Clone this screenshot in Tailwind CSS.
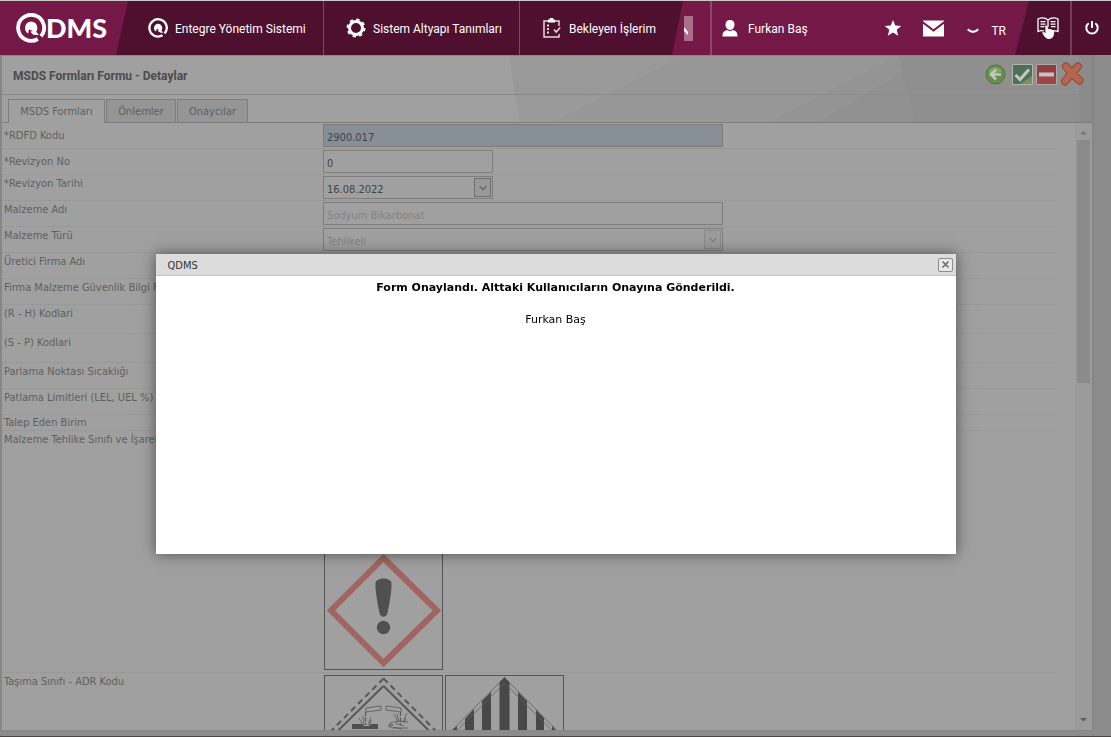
<!DOCTYPE html>
<html lang="tr">
<head>
    <meta charset="UTF-8">
    <meta name="viewport" content="width=device-width, initial-scale=1.0">
    <title>QDMS - MSDS Formları</title>
    <script src="https://cdn.jsdelivr.net/npm/@tailwindcss/browser@4"></script>
</head>
<body class="flex h-screen flex-col overflow-hidden border-b border-[#4a4646] bg-[#8c8c8c] font-['DejaVu_Sans_Condensed','DejaVu_Sans',sans-serif] text-[11px] leading-4 text-[#5f5f5f]">

    <!-- Top bar -->
    <header class="flex h-[55px] shrink-0 border-t border-[#c9c9c9] bg-[#4e102e] font-['Roboto',sans-serif] text-xs text-white">
        <a href="#" aria-label="QDMS" class="flex w-32 shrink-0 items-center bg-[#741848] pl-4 [clip-path:polygon(0_0,100%_0,calc(100%-12px)_100%,0_100%)]">
            <svg class="h-[30px] w-[30px]" viewBox="0 0 30 30" fill="none">
                <path d="M21.800 26A13 13 0 1 1 25 23.300" stroke="#fff" stroke-width="3.800"/>
                <path d="M15 8.500a6.400 6.400 0 0 1 6.400 6.400c0 1.500-.4 2.700-1.200 3.800l2.800 3.300h-3.500c-2.500-.2-4.200-1.500-5-3.500l2.500-.3-4-2-.8 4.200A6.400 6.400 0 0 1 15 8.500z" fill="#fff"/>
            </svg>
            <span class="font-['Lato',sans-serif] text-[27px] leading-8 font-black">DMS</span>
        </a>
        <nav class="flex shrink-0">
            <a href="#" class="flex w-[196px] items-center gap-[7px] border-r border-[#7d4b64] pl-5">
                <svg class="h-5 w-5" viewBox="0 0 30 30" fill="none">
                    <path d="M21.800 26A13 13 0 1 1 25 23.300" stroke="#fff" stroke-width="3.500"/>
                    <path d="M15 8.500a6.400 6.400 0 0 1 6.400 6.400c0 1.500-.4 2.700-1.200 3.800l2.800 3.300h-3.500c-2.500-.2-4.200-1.500-5-3.500l2.500-.3-4-2-.8 4.200A6.400 6.400 0 0 1 15 8.500z" fill="#fff"/>
                </svg>
                <span class="pt-0.5">Entegre Yönetim Sistemi</span>
            </a>
            <a href="#" class="flex w-[196px] items-center gap-[7px] border-r border-[#7d4b64] pl-[22px]">
                <svg class="h-5 w-5" viewBox="0 0 20 20" fill="none" stroke="#fff">
                    <circle cx="10" cy="10" r="6.500" stroke-width="3"/>
                    <circle cx="10" cy="10" r="8.500" stroke-width="2" stroke-dasharray="3.300 3.370"/>
                </svg>
                <span class="pt-0.5">Sistem Altyapı Tanımları</span>
            </a>
            <a href="#" class="flex w-[163px] items-center gap-[7px] pl-[22px]">
                <svg class="h-5 w-5" viewBox="0 0 20 20" fill="none" stroke="#e6dae0" stroke-width="1.500">
                    <path d="M6 3H2v16h15v-3M13 3h4v5"/>
                    <path d="M6 1.500h1.500a2 2 0 0 1 4 0H13v3H6z" fill="#fff" stroke="none"/>
                    <path d="M5 7.500h2M5 11h2M5 14.500h2" stroke-width="2"/>
                    <path d="M12 11.500l2.200 2.500 4-4.500"/>
                </svg>
                <span class="pt-0.5">Bekleyen İşlerim</span>
            </a>
        </nav>
        <div class="-ml-[11px] flex min-w-0 flex-1 items-center bg-[#741848] pr-[23px] [clip-path:polygon(11px_0,100%_0,calc(100%-14px)_100%,0_100%)]">
            <button type="button" aria-label="Ara" class="ml-3 h-[25px] w-[9px] bg-[#aa6e8b]">
                <svg class="h-[25px] w-[9px]" viewBox="0 0 9 25"><path d="M0 11l4 5v3L0 15z" fill="#fff"/></svg>
            </button>
            <div class="ml-[17px] h-full w-0.5 bg-[#8f466d]"></div>
            <a href="#" class="flex items-center gap-2.5 pl-2.5">
                <svg class="h-[18px] w-4" viewBox="0 0 16 18" fill="#fff">
                    <path d="M8 1c3 0 4.500 2 4.500 4.700S10.500 11 8 11 3.500 8.400 3.500 5.700 5 1 8 1z"/>
                    <path d="M.5 17.500c0-4 1-5.500 4.500-6.500 2 1.300 4 1.300 6 0 3.500 1 4.500 2.500 4.500 6.500z"/>
                </svg>
                <span class="pt-0.5">Furkan Baş</span>
            </a>
            <div class="ml-auto flex items-center">
                <button type="button" aria-label="Favoriler">
                    <svg class="h-[18px] w-[18px]" viewBox="0 0 18 18" fill="#fff"><path d="M9 1l2.300 5.500 6 .4-4.600 3.900 1.500 5.900L9 13.500l-5.200 3.200 1.500-5.900L.7 6.900l6-.4z"/></svg>
                </button>
                <button type="button" aria-label="Mesajlar" class="ml-5">
                    <svg class="h-[17px] w-[23px]" viewBox="0 0 23 17"><path d="M1 .5h21v16H1z" fill="#fff"/><path d="M.5 2l11 8.500 11-8.500" fill="none" stroke="#741848" stroke-width="2"/></svg>
                </button>
                <button type="button" class="ml-[22px] flex items-center gap-3 pt-1.5">
                    <svg class="h-1.5 w-3" viewBox="0 0 12 6" fill="none" stroke="#fff" stroke-width="2.200"><path d="M.7 1.200Q6 6.500 11.300 1.200"/></svg>
                    TR
                </button>
            </div>
        </div>
        <button type="button" aria-label="Yardım" class="flex w-[41px] shrink-0 items-center pl-[7px]">
            <svg class="h-6 w-6" viewBox="0 0 24 24" fill="none" stroke="#fff" stroke-width="1.300">
                <path d="M12 4C9 1.500 5.500 1.500 2 3v12.500c2.500-1 4.500-1 6-.5M12 4c3-2.500 6.500-2.500 10-1v12.500c-1.500-.7-3-.8-5-.5M12 4v7"/>
                <path d="M4.500 5.700h5M4.500 8.200h5M4.500 10.700h4M14.500 5.700h5M14.500 8.200h5M15 10.700h4.500"/>
                <path d="M9.300 10c.8-.8 2-.3 2.300.8l.5 2.300c1-.6 1.800-.4 2.300.3 1-.4 1.700 0 2 .6 1-.1 1.800.5 1.800 1.600 0 4-1 7.400-5 7.400-3.200 0-5-2.500-7-6.300.8-1 2-.8 3.300.6z" fill="#fff" stroke="none"/>
            </svg>
        </button>
        <button type="button" aria-label="Çıkış" class="flex w-[41px] shrink-0 items-center justify-center border-l-2 border-[#70405a]">
            <svg class="h-4 w-4" viewBox="0 0 16 16" fill="none" stroke="#fff" stroke-width="2"><path d="M8 1v7M4.700 3.200a5.700 5.700 0 1 0 6.600 0"/></svg>
        </button>
    </header>

    <!-- Form window -->
    <main class="mr-[17px] mb-[5px] flex min-h-0 flex-1 flex-col rounded-br border-2 border-y border-[#868686] bg-[#a0a0a0]">
        <div class="relative shrink-0">
            <svg class="absolute inset-0 h-full w-full" viewBox="0 0 1091 67" preserveAspectRatio="none">
                <path d="M508 0h583v67H518z" fill="#9a9a9a"/>
                <path d="M550 67L680 0h411v67z" fill="#979797"/>
                <path d="M508 0h170l-100 44-64 0z" fill="#999"/>
                <path d="M765 67L895 0h196v67z" fill="#949494"/>
                <path d="M815 67L930 0h161v67z" fill="#919191"/>
                <path d="M897 0l17 67h177V0z" fill="#8f8f8f"/>
                <path d="M1078 0h13v67h-13z" fill="#8b8b8b"/>
            </svg>
            <div class="relative flex h-[39px] items-center justify-between border-b border-[#8a8a8a] pr-2 pl-[11px]">
                <h1 class="pt-0.5 font-['Roboto',sans-serif] text-xs font-bold text-[#4c4c4c]">MSDS Formları Formu - Detaylar</h1>
                <div class="flex items-center gap-[3px] pb-0.5">
                    <button type="button" aria-label="Geri" class="mr-[3px]">
                        <svg class="h-[21px] w-[21px]" viewBox="0 0 21 21" fill="none"><circle cx="10.500" cy="10.500" r="9.500" fill="#668d4c" stroke="#52733f"/><path d="M4 7a7.500 7.500 0 0 1 13 0c-3 3-9 1-13 3z" fill="#82a368"/><path d="M16 10.500H6.500M11 5.500l-5 5 5 5" stroke="#c2c8bd" stroke-width="2.500"/></svg>
                    </button>
                    <button type="button" aria-label="Onayla">
                        <svg class="h-[21px] w-[21px]" viewBox="0 0 21 21"><path d="M.5.5h20v20H.5z" fill="#4c7256" stroke="#b0b4b0"/><path d="M8 20L20 12v8z" fill="#7b9159"/><path d="M3.500 11l4.500 4.500 9-10" fill="none" stroke="#c8c8c8" stroke-width="3"/></svg>
                    </button>
                    <button type="button" aria-label="Reddet">
                        <svg class="h-[21px] w-[21px]" viewBox="0 0 21 21"><path d="M.5.5h20v20H.5z" fill="#8e4040" stroke="#b0a8a8"/><path d="M1 13h19v7H1z" fill="#a04444"/><path d="M3 8.500h15v4H3z" fill="#c4c4c8"/></svg>
                    </button>
                    <button type="button" aria-label="Kapat">
                        <svg class="h-6 w-6" viewBox="0 0 24 24" stroke-linecap="round" fill="none"><path d="M6 4.500Q11 11 19.500 18.500M18 4.500Q11 11 5 19.500" stroke="#8d4434" stroke-width="8"/><path d="M6 4.500Q11 11 19.500 18.500M18 4.500Q11 11 5 19.500" stroke="#b8654f" stroke-width="6.200"/></svg>
                    </button>
                </div>
            </div>
            <div role="tablist" class="relative flex h-7 items-end border-b border-[#7d7d7d] pl-1.5">
                <button type="button" role="tab" aria-selected="true" class="-mb-px h-6 w-[97px] border border-b-0 border-[#7d7d7d] bg-[#a0a0a0]">MSDS Formları</button>
                <button type="button" role="tab" class="ml-px h-[23px] w-[70px] border border-b-0 border-[#7d7d7d] bg-[#959595] pt-0.5">Önlemler</button>
                <button type="button" role="tab" class="ml-px h-[23px] w-[71px] border border-b-0 border-[#7d7d7d] bg-[#959595] pt-0.5">Onaycılar</button>
            </div>
        </div>

        <div class="flex min-h-0 flex-1">
            <form class="min-w-0 flex-1 overflow-hidden pr-5">
                <table class="w-full table-fixed border-separate border-spacing-0 [&_td]:border-b [&_td]:border-dotted [&_td]:border-[#929292] [&_td]:p-0 [&_td]:py-px [&_td]:align-top [&_th]:border-b [&_th]:border-dotted [&_th]:border-[#929292] [&_th]:p-0 [&_th]:pt-px [&_th]:pl-0.5 [&_th]:text-left [&_th]:font-normal [&_th]:whitespace-nowrap">
                    <colgroup><col class="w-[321px]"><col></colgroup>
                    <tbody>
                        <tr class="h-[26px]">
                            <th class="align-middle"><label for="kod">*RDFD Kodu</label></th>
                            <td><input id="kod" type="text" value="2900.017" class="block h-[23px] w-[400px] border border-[#7d7d7d] bg-[#868e96] px-[3px] pt-1 text-[#444]"></td>
                        </tr>
                        <tr class="h-[26px]">
                            <th class="align-middle"><label for="revno">*Revizyon No</label></th>
                            <td><input id="revno" type="text" value="0" class="block h-[23px] w-[170px] border border-[#7d7d7d] px-[3px] pt-1 text-[#444]"></td>
                        </tr>
                        <tr class="h-[26px]">
                            <th class="align-top"><label for="tarih">*Revizyon Tarihi</label></th>
                            <td>
                                <div class="flex h-[23px] w-[170px] items-center border border-[#7d7d7d] pr-px">
                                    <input id="tarih" type="text" value="16.08.2022" class="h-full min-w-0 flex-1 px-[3px] pt-1 text-[#444]">
                                    <button type="button" aria-label="Takvim" class="flex h-[19px] w-[17px] items-center justify-center border border-[#6e6e6e] bg-[#999]">
                                        <svg class="h-2 w-2" viewBox="0 0 8 8" fill="none" stroke="#666" stroke-width="1.300"><path d="M.5 2L4 5.500 7.500 2"/></svg>
                                    </button>
                                </div>
                            </td>
                        </tr>
                        <tr class="h-[26px]">
                            <th class="align-top"><label for="malzeme">Malzeme Adı</label></th>
                            <td><input id="malzeme" type="text" value="Sodyum Bikarbonat" disabled class="block h-[23px] w-[400px] border border-[#7d7d7d] px-[3px] pt-1 text-[#828282]"></td>
                        </tr>
                        <tr class="h-[26px]">
                            <th class="align-top"><label for="tur">Malzeme Türü</label></th>
                            <td>
                                <div class="relative w-[400px]">
                                    <select id="tur" disabled class="block h-[23px] w-full appearance-none border border-[#7d7d7d] px-[3px] pt-1 text-[#828282] opacity-100"><option>Tehlikeli</option></select>
                                    <span class="pointer-events-none absolute top-0.5 right-0.5 flex h-[19px] w-[17px] items-center justify-center border border-[#8a8a8a] bg-[#9c9c9c]">
                                        <svg class="h-2 w-2" viewBox="0 0 8 8" fill="none" stroke="#808080" stroke-width="1.300"><path d="M.5 2L4 5.500 7.500 2"/></svg>
                                    </span>
                                </div>
                            </td>
                        </tr>
                        <tr class="h-[26px]"><th class="align-top">Üretici Firma Adı</th><td></td></tr>
                        <tr class="h-[26px]"><th class="align-top">Firma Malzeme Güvenlik Bilgi Formu</th><td></td></tr>
                        <tr class="h-[29px]"><th class="align-top">(R - H) Kodlari</th><td></td></tr>
                        <tr class="h-[29px]"><th class="align-top">(S - P) Kodlari</th><td></td></tr>
                        <tr class="h-[26px]"><th class="align-top">Parlama Noktası Sıcaklığı</th><td></td></tr>
                        <tr class="h-[26px]"><th class="align-top">Patlama Limitleri (LEL, UEL %)</th><td></td></tr>
                        <tr class="h-4"><th class="align-top leading-[14px]">Talep Eden Birim</th><td></td></tr>
                        <tr class="h-[242px]">
                            <th class="align-top">Malzeme Tehlike Sınıfı ve İşaretleri</th>
                            <td>
                                <div class="flex h-[239px] items-end pb-px pl-px">
                                    <svg class="h-[119px] w-[119px] border border-[#555]" viewBox="0 0 117 117">
                                        <path d="M58.500 6L112 58.500 58.500 111 6 58.500z" fill="none" stroke="#a16561" stroke-width="6"/>
                                        <path d="M50.500 31c1-6 15-6 16 0 .4 7-2 20-4 30-1 5-7 5-8 0-2-10-4.500-23-4-30z" fill="#505050"/>
                                        <circle cx="58.500" cy="75.500" r="6.700" fill="#505050"/>
                                    </svg>
                                </div>
                            </td>
                        </tr>
                        <tr>
                            <th class="align-top">Taşıma Sınıfı - ADR Kodu</th>
                            <td>
                                <div class="flex gap-0.5 pt-px pl-px">
                                    <svg class="h-[119px] w-[119px] border border-[#555]" viewBox="0 0 117 117" fill="none" stroke="#585858">
                                        <path d="M58.500 2.500L2 59M58.500 2.500L115 59" stroke-width="2" stroke-dasharray="6 4"/>
                                        <path d="M58.500 10L5 62.500M58.500 10L112 62.500" stroke-width="2"/>
                                        <path d="M41 32l15-2v4l-15 2zM76 32l-15-2v4l15 2z" stroke-width=".8"/>
                                        <path d="M40.500 36v13M75.500 36v13" stroke-width="1.200" stroke-dasharray="4 1.500"/>
                                        <path d="M38 49l-4-7M39 49l-1-9M43 49l3-8M45 49l1-5M73 46l-4-8M74 46l-2-8M78 46l4-9M79 47l2-5" stroke-width=".8"/>
                                        <path d="M27 48h10l2 2h5l2-2h7v5H27z" fill="#505050" stroke="none"/>
                                        <path d="M83 46c-7-1-16-1-19 2l4 1-5 1 5 2h15M70 47l9 3M68 51l9 2" stroke-width=".8"/>
                                    </svg>
                                    <svg class="h-[119px] w-[119px] border border-[#555]" viewBox="0 0 117 117">
                                        <path d="M6 54l5-4v6H4zM19 43l9-10v84h-9zM36 25l9-9v101h-9zM53.500 6l5-5 5 5v111h-10zM72 16l9 9v92h-9zM90 34l8 8v75h-8zM106 50l7 8h-7z" fill="#484848"/>
                                        <path d="M2 58.500L58.500 1.500 115 58.500M7 58.500L58.500 7l51.500 51.500" fill="none" stroke="#606060" stroke-width=".8"/>
                                    </svg>
                                </div>
                            </td>
                        </tr>
                    </tbody>
                </table>
            </form>
            <!-- Scroll track -->
            <div class="flex w-[17px] flex-col items-center bg-[#9b9b9b]">
                <svg class="mt-1.5 mb-1 h-[7px] w-[7px] shrink-0" viewBox="0 0 7 7"><path d="M0 5.500L3.500 2 7 5.500z" fill="#757575"/></svg>
                <div class="h-[243px] w-[13px] bg-[#8b8b8b]"></div>
                <svg class="mt-auto mb-1.5 h-[7px] w-[7px] shrink-0" viewBox="0 0 7 7"><path d="M0 1h7L3.500 4.500z" fill="#5c5c5c"/></svg>
            </div>
        </div>
    </main>

    <!-- Message dialog -->
    <div class="fixed inset-0 flex items-start justify-center pt-[254px]">
        <div role="dialog" aria-labelledby="dialogTitle" class="min-h-[300px] w-full max-w-[800px] bg-white text-black shadow-[0_0_14px_rgba(0,0,0,0.5)]">
            <div class="flex h-[22px] items-center justify-between border-b border-[#c4c4c4] bg-[#dcdcdc] pr-[3px] pl-3">
                <h2 id="dialogTitle" class="pt-0.5 text-[#333]">QDMS</h2>
                <button type="button" aria-label="Kapat" class="flex h-3.5 w-[15px] items-center justify-center rounded-xs border border-[#8c8c8c] bg-[#e8e8e8]">
                    <svg class="h-[7px] w-[7px]" viewBox="0 0 7 7" stroke="#6a6a72" stroke-width="1.500"><path d="M.5.5l6 6M6.500.5l-6 6"/></svg>
                </button>
            </div>
            <div class="flex flex-col gap-4 pt-1 text-center font-['DejaVu_Sans',sans-serif]">
                <p class="font-bold">Form Onaylandı. Alttaki Kullanıcıların Onayına Gönderildi.</p>
                <p>Furkan Baş</p>
            </div>
        </div>
    </div>
</body>
</html>
